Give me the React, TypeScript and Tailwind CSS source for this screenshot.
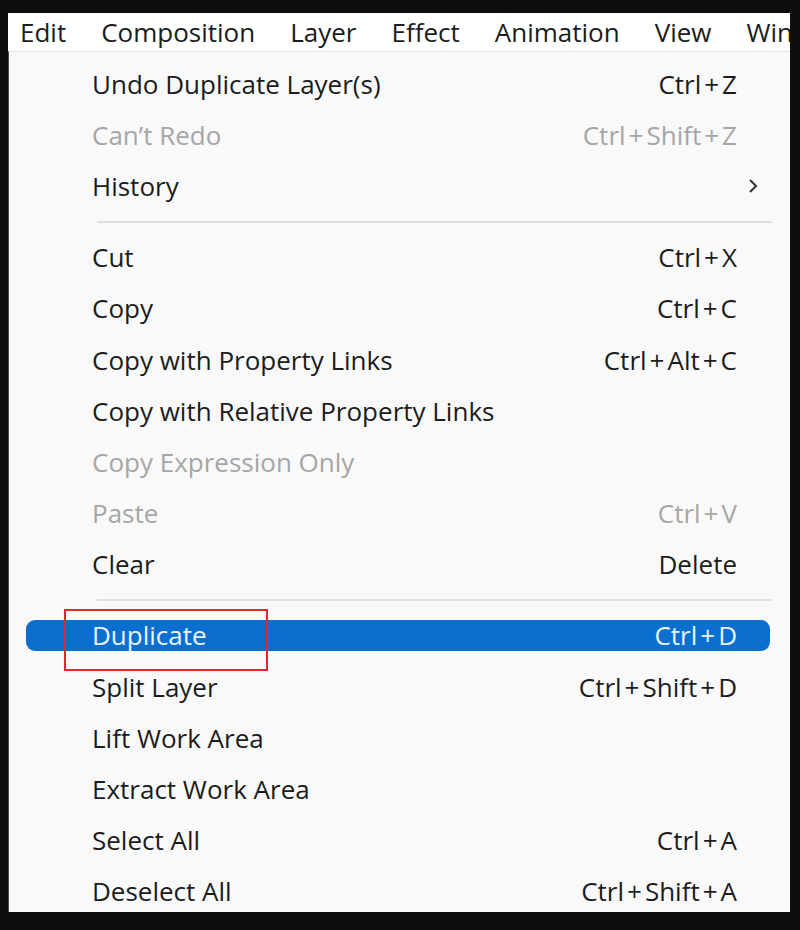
import React from "react";

type Item =
  | { type: "sep" }
  | { type: "item"; label: string; shortcut?: string; disabled?: boolean; submenu?: boolean; active?: boolean };

const items: Item[] = [
  { type: "item", label: "Undo Duplicate Layer(s)", shortcut: "Ctrl+Z" },
  { type: "item", label: "Can\u2019t Redo", shortcut: "Ctrl+Shift+Z", disabled: true },
  { type: "item", label: "History", submenu: true },
  { type: "sep" },
  { type: "item", label: "Cut", shortcut: "Ctrl+X" },
  { type: "item", label: "Copy", shortcut: "Ctrl+C" },
  { type: "item", label: "Copy with Property Links", shortcut: "Ctrl+Alt+C" },
  { type: "item", label: "Copy with Relative Property Links" },
  { type: "item", label: "Copy Expression Only", disabled: true },
  { type: "item", label: "Paste", shortcut: "Ctrl+V", disabled: true },
  { type: "item", label: "Clear", shortcut: "Delete" },
  { type: "sep" },
  { type: "item", label: "Duplicate", shortcut: "Ctrl+D", active: true },
  { type: "item", label: "Split Layer", shortcut: "Ctrl+Shift+D" },
  { type: "item", label: "Lift Work Area" },
  { type: "item", label: "Extract Work Area" },
  { type: "item", label: "Select All", shortcut: "Ctrl+A" },
  { type: "item", label: "Deselect All", shortcut: "Ctrl+Shift+A" },
];

const menus = ["Edit", "Composition", "Layer", "Effect", "Animation", "View", "Window"];

function Shortcut({ text }: { text: string }) {
  const parts = text.split("+");
  return (
    <span className="flex items-center whitespace-nowrap">
      {parts.map((p, i) => (
        <React.Fragment key={i}>
          {i > 0 && <span className="mx-[3px]">+</span>}
          <span>{p}</span>
        </React.Fragment>
      ))}
    </span>
  );
}

export default function App() {
  return (
    <div
      className="w-[800px] h-[930px] bg-[#0e0e0e] pt-[13px] pl-[8px] overflow-hidden"
      style={{ fontFamily: '"Open Sans", "Noto Sans", sans-serif' }}
    >
      <div className="w-[782px] h-[899px] flex flex-col overflow-hidden">
        {/* menu bar */}
        <div className="h-[38px] bg-white flex items-center gap-[35px] pl-[12px] text-[26px] text-[#1c1c1c] whitespace-nowrap overflow-hidden shrink-0">
          {menus.map((m) => (
            <span key={m} className="leading-none">
              {m}
            </span>
          ))}
        </div>
        {/* dropdown panel */}
        <div className="flex-1 bg-[#f9f9f9] border-t border-[#e2e2e2] border-l border-l-[#4a4a4a] pt-[6px] relative">
          {items.map((it, i) =>
            it.type === "sep" ? (
              <div key={i} className="h-[20px] flex items-center pl-[88px] pr-[18px]">
                <div className="h-[2px] w-full bg-[#e0e0e0]" />
              </div>
            ) : (
              <div key={i} className="h-[51.2px] relative flex items-center">
                {it.active && (
                  <div className="absolute left-[17px] right-[20px] top-[10px] bottom-[10px] rounded-[9px] bg-[#0b6fcf]" />
                )}
                <div
                  className={
                    "relative flex items-center w-full pl-[83px] pr-[53px] text-[26px] leading-none " +
                    (it.active ? "text-[#e8f3ff]" : it.disabled ? "text-[#a6a6a6]" : "text-[#1c1c1c]")
                  }
                >
                  <span className="flex-1 whitespace-nowrap">{it.label}</span>
                  {it.shortcut && <Shortcut text={it.shortcut} />}
                  {it.submenu && (
                    <svg
                      className="absolute right-[32px]"
                      width="10"
                      height="16"
                      viewBox="0 0 10 16"
                      fill="none"
                      stroke="#333"
                      strokeWidth="2"
                    >
                      <path d="M2 2 L8 8 L2 14" />
                    </svg>
                  )}
                </div>
                {it.active && (
                  <div className="absolute left-[55px] top-[-1px] w-[204px] h-[62px] border-2 border-[#e4262c] z-10" />
                )}
              </div>
            )
          )}
        </div>
      </div>
    </div>
  );
}
